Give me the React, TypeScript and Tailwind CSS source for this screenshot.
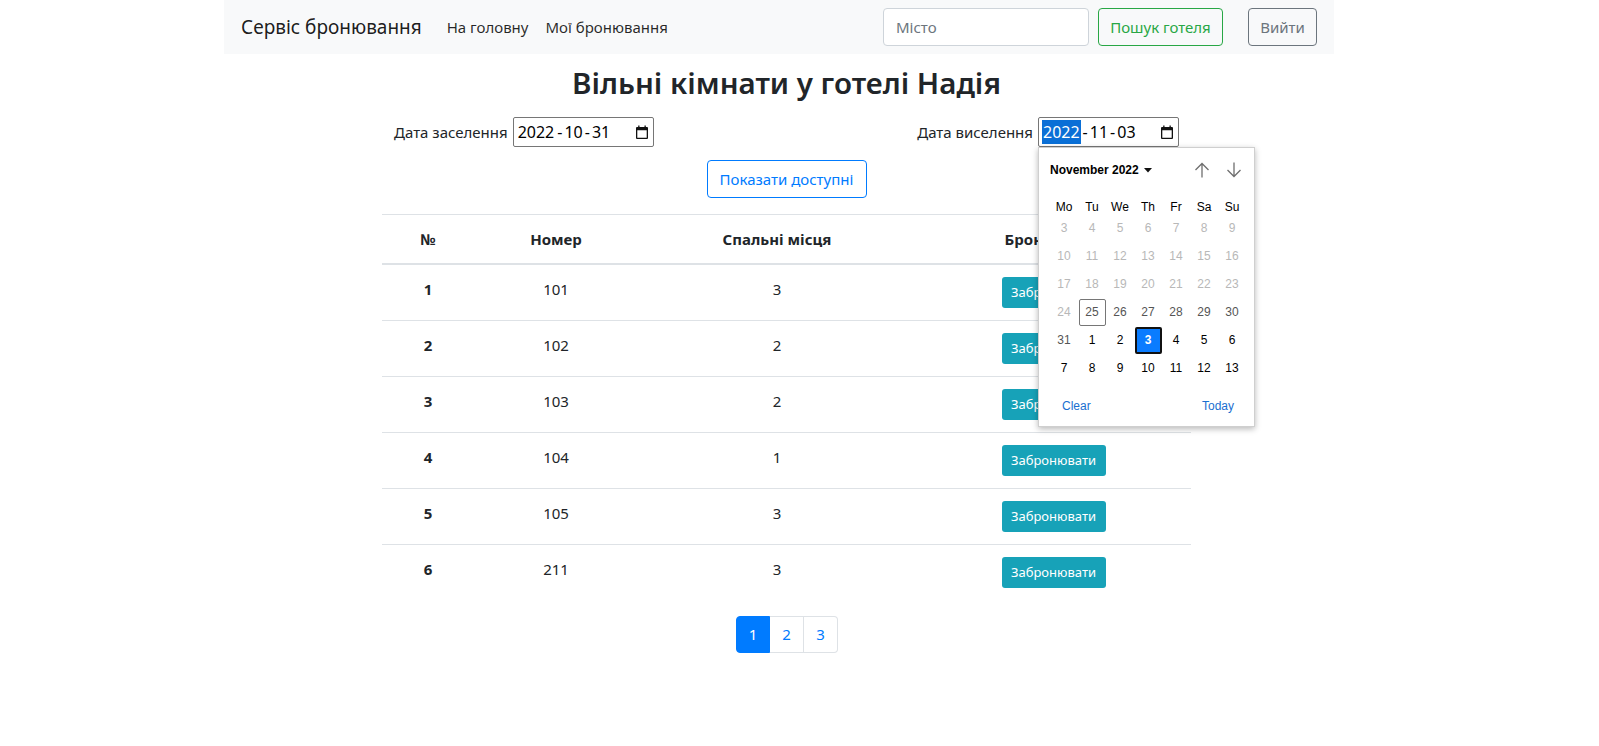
import React from "react";

type Room = { n: number; number: number; beds: number };

const rooms: Room[] = [
  { n: 1, number: 101, beds: 3 },
  { n: 2, number: 102, beds: 2 },
  { n: 3, number: 103, beds: 2 },
  { n: 4, number: 104, beds: 1 },
  { n: 5, number: 105, beds: 3 },
  { n: 6, number: 211, beds: 3 },
];

type Day = { d: number; kind: "disabled" | "other" | "current" | "selected" | "today" };

const weeks: Day[][] = [
  [3, 4, 5, 6, 7, 8, 9].map((d) => ({ d, kind: "disabled" as const })),
  [10, 11, 12, 13, 14, 15, 16].map((d) => ({ d, kind: "disabled" as const })),
  [17, 18, 19, 20, 21, 22, 23].map((d) => ({ d, kind: "disabled" as const })),
  [
    { d: 24, kind: "disabled" },
    { d: 25, kind: "today" },
    { d: 26, kind: "other" },
    { d: 27, kind: "other" },
    { d: 28, kind: "other" },
    { d: 29, kind: "other" },
    { d: 30, kind: "other" },
  ],
  [
    { d: 31, kind: "other" },
    { d: 1, kind: "current" },
    { d: 2, kind: "current" },
    { d: 3, kind: "selected" },
    { d: 4, kind: "current" },
    { d: 5, kind: "current" },
    { d: 6, kind: "current" },
  ],
  [7, 8, 9, 10, 11, 12, 13].map((d) => ({ d, kind: "current" as const })),
];

function CalendarIcon() {
  return (
    <svg width="12" height="14" viewBox="0 0 12 14">
      <path
        fillRule="evenodd"
        fill="#111"
        d="M2.2 0.5h1.3v1.5h5V0.5h1.3v1.5h1.2a1 1 0 0 1 1 1v10a1 1 0 0 1-1 1H1a1 1 0 0 1-1-1V3a1 1 0 0 1 1-1h1.2z M1.3 5.2v7.5h9.4V5.2z"
      />
    </svg>
  );
}

function Arrow({ down }: { down?: boolean }) {
  return (
    <svg width="16" height="16" viewBox="0 0 16 16" className={down ? "rotate-180" : ""}>
      <path d="M8 1.5V15.5 M1.5 8L8 1.5L14.5 8" stroke="#6f6f6f" strokeWidth="1.3" fill="none" />
    </svg>
  );
}

function DateBox({ value, highlight }: { value: string[]; highlight?: boolean }) {
  return (
    <div className="flex h-[30px] w-[141px] items-center rounded-[2px] border border-[#767676] bg-white pl-[3px] pr-[5px] text-[16px] text-black">
      <span className={highlight ? "bg-[#0a6fd6] px-[1px] leading-[24px] text-white" : "px-[1px]"}>{value[0]}</span>
      <span className="mx-[2px]">-</span>
      <span>{value[1]}</span>
      <span className="mx-[2px]">-</span>
      <span>{value[2]}</span>
      <span className="ml-auto flex">
        <CalendarIcon />
      </span>
    </div>
  );
}

function DayCell({ day }: { day: Day }) {
  const base = "mx-auto flex h-[27px] w-[27px] items-center justify-center";
  if (day.kind === "selected") {
    return (
      <div className={base + " rounded-[2px] border-2 border-[#111] bg-[#0a7cff] font-bold text-white"}>{day.d}</div>
    );
  }
  if (day.kind === "today") {
    return <div className={base + " rounded-[2px] border border-[#767676] text-[#555]"}>{day.d}</div>;
  }
  const color =
    day.kind === "disabled" ? "text-[#b8b8b8]" : day.kind === "other" ? "text-[#555]" : "text-black";
  return <div className={base + " " + color}>{day.d}</div>;
}

function CalendarPopup() {
  return (
    <div className="absolute left-0 top-full z-10 w-[217px] border border-[#cfcfcf] bg-white pb-[10px] pl-[11px] pr-[10px] pt-[8px] font-['Liberation_Sans',Arial,sans-serif] text-[12px] shadow-[0_2px_6px_rgba(0,0,0,0.28)]">
      <div className="flex h-[28px] items-center">
        <span className="font-bold text-black">November 2022</span>
        <svg width="8" height="5" viewBox="0 0 8 5" className="ml-[5px]">
          <path d="M0 0h8L4 4.5z" fill="#111" />
        </svg>
        <span className="ml-auto mr-[2px] flex items-center gap-[16px]">
          <Arrow />
          <Arrow down />
        </span>
      </div>
      <div className="mt-[14px] grid h-[14px] w-[196px] grid-cols-7 items-center text-center text-black">
        {["Mo", "Tu", "We", "Th", "Fr", "Sa", "Su"].map((w) => (
          <span key={w}>{w}</span>
        ))}
      </div>
      <div className="mt-[2px] w-[196px]">
        {weeks.map((wk, i) => (
          <div key={i} className="grid h-[28px] grid-cols-7 items-center">
            {wk.map((day, j) => (
              <DayCell key={j} day={day} />
            ))}
          </div>
        ))}
      </div>
      <div className="mt-[14px] flex h-[20px] items-center justify-between pl-[12px] pr-[10px] text-[#1a6fd0]">
        <span>Clear</span>
        <span>Today</span>
      </div>
    </div>
  );
}

export default function App() {
  return (
    <div className="min-h-[746px] bg-white font-['Noto_Sans','Open_Sans',sans-serif] text-[#212529]">
      {/* Navbar */}
      <nav className="ml-[224px] flex h-[54px] w-[1110px] items-center bg-[#f8f9fa] pl-[17px] pr-[17px]">
        <span className="text-[19px] text-black/90">Сервіс бронювання</span>
        <div className="ml-[25px] flex gap-[17px] text-[15px] text-black/85">
          <span>На головну</span>
          <span>Мої бронювання</span>
        </div>
        <div className="ml-auto flex items-center">
          <div className="flex h-[38px] w-[206px] items-center rounded-[4px] border border-[#ced4da] bg-white px-[12px] text-[15px] text-[#6c757d]">
            Місто
          </div>
          <button className="ml-[9px] h-[38px] w-[125px] rounded-[4px] border border-[#28a745] text-[15px] text-[#28a745]">
            Пошук готеля
          </button>
          <button className="ml-[25px] h-[38px] w-[69px] rounded-[4px] border border-[#6c757d] text-[15px] text-[#6c757d]">
            Вийти
          </button>
        </div>
      </nav>

      <main className="ml-[382px] w-[809px]">
        <h2 className="mt-[10px] text-center text-[29.5px] font-semibold leading-[38px]">Вільні кімнати у готелі Надія</h2>

        {/* Dates */}
        <div className="mt-[15px] flex items-center justify-between px-[12px] text-[15px]">
          <div className="flex items-center gap-[5px]">
            <span>Дата заселення</span>
            <DateBox value={["2022", "10", "31"]} />
          </div>
          <div className="flex items-center gap-[5px]">
            <span>Дата виселення</span>
            <div className="relative">
              <DateBox value={["2022", "11", "03"]} highlight />
              <CalendarPopup />
            </div>
          </div>
        </div>

        <div className="mt-[13px] flex justify-center">
          <button className="h-[38px] w-[160px] rounded-[4px] border border-[#007bff] text-[15px] text-[#007bff]">
            Показати доступні
          </button>
        </div>

        {/* Table */}
        <table className="mt-[16px] w-[809px] border-collapse text-center text-[15px]">
          <thead>
            <tr className="border-b-2 border-t border-[#dee2e6]">
              <th className="w-[92px] py-[12px] font-bold leading-[24px]">№</th>
              <th className="w-[164px] py-[12px] font-bold leading-[24px]">Номер</th>
              <th className="w-[278px] py-[12px] font-bold leading-[24px]">Спальні місця</th>
              <th className="py-[12px] font-bold leading-[24px]">Бронювання</th>
            </tr>
          </thead>
          <tbody>
            {rooms.map((r) => (
              <tr key={r.n} className="border-t border-[#dee2e6]">
                <td className="py-[12px] align-top font-bold leading-[24px]">{r.n}</td>
                <td className="py-[12px] align-top leading-[24px]">{r.number}</td>
                <td className="py-[12px] align-top leading-[24px]">{r.beds}</td>
                <td className="py-[12px] align-top">
                  <button className="block mx-auto h-[31px] w-[104px] rounded-[3px] bg-[#17a2b8] text-[13px] text-white">
                    Забронювати
                  </button>
                </td>
              </tr>
            ))}
          </tbody>
        </table>

        {/* Pagination */}
        <div className="mt-[16px] flex justify-center pl-[1px]">
          <div className="flex h-[37px] text-[15px]">
            <span className="flex w-[34px] items-center justify-center rounded-l-[4px] border border-[#007bff] bg-[#007bff] text-white">
              1
            </span>
            <span className="flex w-[34px] items-center justify-center border border-l-0 border-[#dee2e6] text-[#007bff]">
              2
            </span>
            <span className="flex w-[34px] items-center justify-center rounded-r-[4px] border border-l-0 border-[#dee2e6] text-[#007bff]">
              3
            </span>
          </div>
        </div>
      </main>
    </div>
  );
}
